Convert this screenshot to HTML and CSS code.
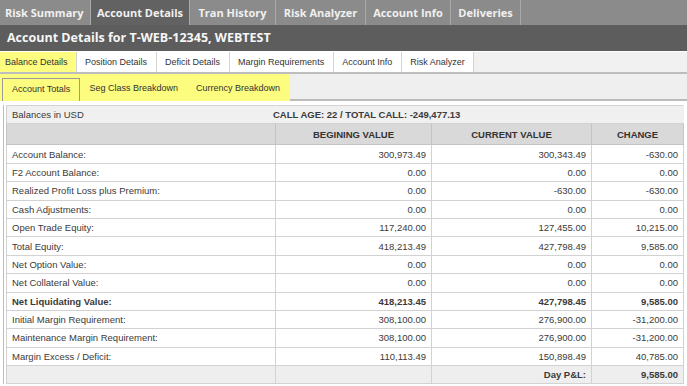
FILE: index.html
```html
<!DOCTYPE html>
<html>
<head>
<meta charset="utf-8">
<link rel="stylesheet" href="styles.css">
</head>
<body>
<nav class="topnav">
  <div class="ttab t1">Risk Summary</div>
  <div class="ttab t2 active">Account Details</div>
  <div class="ttab t3">Tran History</div>
  <div class="ttab t4">Risk Analyzer</div>
  <div class="ttab t5">Account Info</div>
  <div class="ttab t6">Deliveries</div>
</nav>
<div class="titlebar">Account Details for T-WEB-12345, WEBTEST</div>
<div class="subtabs">
  <div class="stab hl">Balance Details</div>
  <div class="stab">Position Details</div>
  <div class="stab">Deficit Details</div>
  <div class="stab">Margin Requirements</div>
  <div class="stab">Account Info</div>
  <div class="stab">Risk Analyzer</div>
</div>
<div class="innertabs">
  <div class="itab-group">
    <div class="itab active">Account Totals</div>
    <div class="itab">Seg Class Breakdown</div>
    <div class="itab">Currency Breakdown</div>
  </div>
</div>
<div class="tablewrap">
  <table class="bal">
    <colgroup>
      <col class="c-label"><col class="c-begin"><col class="c-cur"><col class="c-chg">
    </colgroup>
    <tr class="caption-row">
      <td class="lbl">Balances in USD</td>
      <td colspan="3" class="callage">CALL AGE: 22 / TOTAL CALL: -249,477.13</td>
    </tr>
    <tr class="head-row">
      <th></th><th>BEGINING VALUE</th><th>CURRENT VALUE</th><th>CHANGE</th>
    </tr>
    <tr><td class="lbl">Account Balance:</td><td>300,973.49</td><td>300,343.49</td><td>-630.00</td></tr>
    <tr><td class="lbl">F2 Account Balance:</td><td>0.00</td><td>0.00</td><td>0.00</td></tr>
    <tr><td class="lbl">Realized Profit Loss plus Premium:</td><td>0.00</td><td>-630.00</td><td>-630.00</td></tr>
    <tr><td class="lbl">Cash Adjustments:</td><td>0.00</td><td>0.00</td><td>0.00</td></tr>
    <tr><td class="lbl">Open Trade Equity:</td><td>117,240.00</td><td>127,455.00</td><td>10,215.00</td></tr>
    <tr><td class="lbl">Total Equity:</td><td>418,213.49</td><td>427,798.49</td><td>9,585.00</td></tr>
    <tr><td class="lbl">Net Option Value:</td><td>0.00</td><td>0.00</td><td>0.00</td></tr>
    <tr><td class="lbl">Net Collateral Value:</td><td>0.00</td><td>0.00</td><td>0.00</td></tr>
    <tr class="bold"><td class="lbl">Net Liquidating Value:</td><td>418,213.45</td><td>427,798.45</td><td>9,585.00</td></tr>
    <tr><td class="lbl">Initial Margin Requirement:</td><td>308,100.00</td><td>276,900.00</td><td>-31,200.00</td></tr>
    <tr><td class="lbl">Maintenance Margin Requirement:</td><td>308,100.00</td><td>276,900.00</td><td>-31,200.00</td></tr>
    <tr><td class="lbl">Margin Excess / Deficit:</td><td>110,113.49</td><td>150,898.49</td><td>40,785.00</td></tr>
    <tr class="foot-row bold"><td></td><td></td><td>Day P&amp;L:</td><td>9,585.00</td></tr>
  </table>
</div>
</body>
</html>
```
FILE: styles.css
```css
* { box-sizing: border-box; }
html, body { margin: 0; padding: 0; background: #ffffff; }
body { font-family: "Liberation Sans", Arial, sans-serif; color: #333; width: 687px; height: 386px; overflow: hidden; }

.topnav { display: flex; height: 25px; background: #8b8b8b; }
.ttab {
  font-family: "Open Sans", sans-serif; font-weight: 700; font-size: 11px;
  color: #f0f0f0; line-height: 25px; text-align: center;
  border-right: 1px solid #a9a9a9; white-space: nowrap; flex-shrink: 0;
}
.t1 { width: 91px; text-align: left; padding-left: 5px; }
.t2 { width: 99px; }
.t3 { width: 86px; }
.t4 { width: 90px; }
.t5 { width: 85px; }
.t6 { width: 70px; }
.ttab.active { background: #626262; }

.titlebar {
  height: 26px; background: #5d5d5d; color: #f6f6f6;
  font-family: "Open Sans", sans-serif; font-weight: 700; font-size: 12.5px;
  line-height: 26px; padding-left: 7px;
}

.subtabs {
  display: flex; height: 23px; background: #f1f1f1;
  border-top: 1px solid #ffffff; border-bottom: 2px solid #bdbdbd;
}
.stab {
  font-size: 9px; line-height: 20px; padding: 0 8.5px; background: #ffffff;
  border-right: 1px solid #d4d4d4; color: #333; white-space: nowrap;
}
.stab.hl { background: #fdfd80; padding: 0 8px 0 5px; }

.innertabs {
  height: 27px; background: #efefef; border-bottom: 2px solid #bbbbbb;
}
.itab-group {
  display: flex; align-items: flex-end; width: 290px; height: 27px;
  background: #fcfc7e; padding: 0 0 2px 2px;
}
.itab {
  font-size: 9px; line-height: 21px; padding: 0 9px; color: #333;
  white-space: nowrap; flex-shrink: 0;
}
.itab.active {
  padding: 0 9px; border: 1px solid #9a9a9a; border-bottom: none;
  line-height: 21px; margin-bottom: -2px; height: 23px;
}

.tablewrap {
  margin: 4px 4px 0 3px; padding-left: 2px;
  border-left: 1px solid #bdbdbd;
}
.bal {
  width: 677px; border-collapse: collapse; table-layout: fixed;
  font-size: 9.5px; color: #3a3a3a;
}
.c-label { width: 269px; }
.c-begin { width: 156px; }
.c-cur { width: 160px; }
.c-chg { width: 92px; }
.bal td, .bal th {
  border: 1px solid #d2d2d2; height: 18.4px; padding: 0 5px;
  text-align: right; white-space: nowrap; vertical-align: middle;
}
.bal td.lbl { text-align: left; padding-left: 5px; }
.caption-row td { background: #f0f0f0; border-left-color: #f0f0f0; border-right-color: #f0f0f0; }
.caption-row td.lbl { border-left-color: #d2d2d2; }
.caption-row td.callage { text-align: left; font-weight: 700; padding-left: 0; text-indent: -3px; }
.head-row th { background: #d9d9d9; height: 21px; text-align: center; font-weight: 700; border-color: #c4c4c4; color: #333; }
.bold td { font-weight: 700; }
.foot-row td { background: #eeeeee; }
```
